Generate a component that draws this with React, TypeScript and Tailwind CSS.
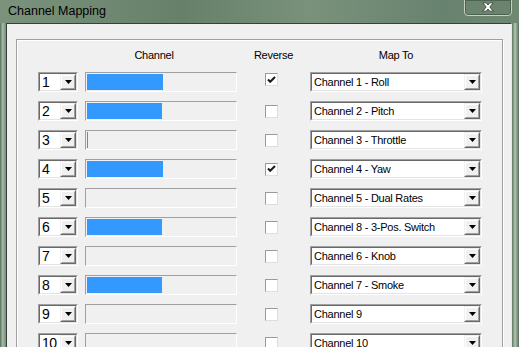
import React from 'react';

const rows = [
  { n: '1', fill: 76, rev: true, map: 'Channel 1 - Roll' },
  { n: '2', fill: 75, rev: false, map: 'Channel 2 - Pitch' },
  { n: '3', fill: 1, rev: false, map: 'Channel 3 - Throttle' },
  { n: '4', fill: 76, rev: true, map: 'Channel 4 - Yaw' },
  { n: '5', fill: 0, rev: false, map: 'Channel 5 - Dual Rates' },
  { n: '6', fill: 75, rev: false, map: 'Channel 8 - 3-Pos. Switch' },
  { n: '7', fill: 0, rev: false, map: 'Channel 6 - Knob' },
  { n: '8', fill: 75, rev: false, map: 'Channel 7 - Smoke' },
  { n: '9', fill: 0, rev: false, map: 'Channel 9' },
  { n: '10', fill: 0, rev: false, map: 'Channel 10' }
];

const DropButton: React.FC = () => (
  <div className="w-[16px] h-[16px] border border-t-[#f0f0f0] border-l-[#f0f0f0] border-b-[#696969] border-r-[#696969]">
    <div className="w-full h-full bg-[#f0f0f0] border border-t-white border-l-white border-b-[#a0a0a0] border-r-[#a0a0a0] flex items-center justify-center">
      <svg width="7" height="4" viewBox="0 0 7 4">
        <path d="M0 0h7L3.5 4z" fill="#000" />
      </svg>
    </div>
  </div>
);

// sunken 3d box used by combos
const Sunken: React.FC<{ className: string; children: React.ReactNode }> = ({ className, children }) => (
  <div className={`border border-t-[#a0a0a0] border-l-[#a0a0a0] border-b-white border-r-white ${className}`}>
    <div className="w-full h-full border border-t-[#696969] border-l-[#696969] border-b-[#e3e3e3] border-r-[#e3e3e3] bg-white flex">
      {children}
    </div>
  </div>
);

const CheckBox: React.FC<{ checked: boolean; first: boolean }> = ({ checked, first }) => (
  <div
    className={`w-[13px] h-[13px] border border-t-[#9a9a9a] border-l-[#9a9a9a] border-b-[#dedede] border-r-[#dedede] bg-white flex items-center justify-center ${
      first ? 'self-start mt-[1px]' : ''
    }`}
  >
    {checked && (
      <svg width="9" height="8" viewBox="0 0 9 8">
        <path d="M1 3.5l2.2 2.3L8 1" fill="none" stroke="#1a1a1a" strokeWidth="2" />
      </svg>
    )}
  </div>
);

const App: React.FC = () => {
  return (
    <div className="w-[519px] h-[347px] overflow-hidden bg-[#6c866f] font-['Liberation_Sans',Arial,sans-serif]">
      {/* Title bar */}
      <div className="h-[23px] flex items-start bg-[linear-gradient(90deg,#7b937d_0%,#66806a_35%,#7a927b_60%,#688270_85%,#6e8871_100%)]">
        <div className="pl-[8px] pt-[3px] text-[12.5px] leading-[16px] text-black">Channel Mapping</div>
        <div className="ml-auto mr-[7px] -mt-px w-[48px] h-[17px] rounded-b-[4px] border border-[#c3d0c3] shadow-[inset_0_0_0_1px_#4e6251] bg-[#6a846d] flex justify-center pt-[2px]">
          <svg width="12" height="10" viewBox="0 0 12 10">
            <path
              d="M0.8 0.8h3.4l1.8 2.2 1.8-2.2h3.4L7.8 5l3.4 4.2H7.8L6 7 4.2 9.2H0.8L4.2 5z"
              fill="#fff"
              stroke="#3c4a3e"
              strokeWidth="0.9"
              strokeLinejoin="round"
            />
          </svg>
        </div>
      </div>

      <div className="flex h-[324px]">
        <div className="w-[6px] bg-[linear-gradient(to_right,#56705a,#a9bca9_45%,#748c76)]" />
        <div className="flex-1 bg-[#f0f0f0] border-l border-t border-r border-l-[#34423a] border-t-[#34423a] border-r-[#e6ebe6] pl-[9px] pt-[15px]">
          {/* Group box */}
          <div className="w-[487px] h-[400px] border border-[#a0a0a0] shadow-[1px_1px_0_#fff,inset_1px_1px_0_#fff] pl-[21px] pt-[8px] text-black">
            <div className="flex text-[11px] leading-[14px] tracking-[-0.25px]">
              <div className="w-[199px] pl-[33px] text-center">Channel</div>
              <div className="w-[73px] text-center">Reverse</div>
              <div className="w-[172px] text-center">Map To</div>
            </div>

            <div className="mt-[10px] flex flex-col gap-[9px]">
              {rows.map((r, i) => (
                <div key={r.n} className="flex items-center h-[20px]">
                  <Sunken className="w-[40px] h-[20px]">
                    <div className="flex-1 pl-[2px] text-[14px] leading-[16px] tracking-[-0.5px]">{r.n}</div>
                    <DropButton />
                  </Sunken>

                  <div className="ml-[7px] w-[152px] h-[20px] border border-t-[#a0a0a0] border-l-[#a0a0a0] border-b-white border-r-white bg-[#f0f0f0] p-px">
                    <div className="h-full bg-[#3399ff]" style={{ width: r.fill }} />
                  </div>

                  <div className="w-[73px] h-[20px] pl-[28px] flex items-center">
                    <CheckBox checked={r.rev} first={i === 0} />
                  </div>

                  <Sunken className="w-[172px] h-[20px]">
                    <div className="flex-1 pl-[2px] text-[11px] leading-[16px] tracking-[-0.25px] whitespace-nowrap overflow-hidden">
                      {r.map}
                    </div>
                    <DropButton />
                  </Sunken>
                </div>
              ))}
            </div>
          </div>
        </div>
        <div className="w-[7px] bg-[linear-gradient(to_right,#5f7762,#b3c4b3_45%,#566d59)]" />
      </div>
    </div>
  );
};

export default App;
